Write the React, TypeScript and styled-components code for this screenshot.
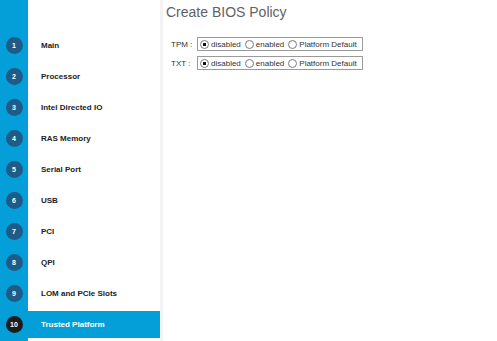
import { createGlobalStyle, styled } from "styled-components";

const steps = [
  "Main",
  "Processor",
  "Intel Directed IO",
  "RAS Memory",
  "Serial Port",
  "USB",
  "PCI",
  "QPI",
  "LOM and PCIe Slots",
  "Trusted Platform",
];

const activeStep = 9;

const policies = [
  { name: "TPM :", value: "disabled" },
  { name: "TXT :", value: "disabled" },
];

const options = ["disabled", "enabled", "Platform Default"];

const GlobalStyle = createGlobalStyle`
  html, body {
    margin: 0;
    padding: 0;
    background: #ffffff;
  }
  body {
    font-family: "Liberation Sans", Arial, sans-serif;
  }
`;

const App = (): JSX.Element => {
  return (
    <>
      <GlobalStyle />
      <Page>
        <Sidebar>
          {steps.map((step, index) => (
            <StepRow key={step}>
              <StepBadge $active={index === activeStep}>{index + 1}</StepBadge>
              <StepLabel $active={index === activeStep}>{step}</StepLabel>
            </StepRow>
          ))}
        </Sidebar>
        <Main>
          <Title>Create BIOS Policy</Title>
          <Form>
            {policies.map((policy) => (
              <FieldRow key={policy.name}>
                <FieldName>{policy.name}</FieldName>
                <RadioGroup>
                  {options.map((opt) => (
                    <RadioOption key={opt}>
                      <RadioCircle $checked={opt === policy.value} />
                      {opt}
                    </RadioOption>
                  ))}
                </RadioGroup>
              </FieldRow>
            ))}
          </Form>
        </Main>
      </Page>
    </>
  );
};

export default App;

const Page = styled.div`
  display: flex;
  width: 497px;
  height: 341px;
  overflow: hidden;
`;

const Sidebar = styled.nav`
  width: 160px;
  flex-shrink: 0;
  display: flex;
  flex-direction: column;
  gap: 4px;
  padding-top: 32px;
  box-sizing: border-box;
  background: linear-gradient(to right, #049fd9 28px, #ffffff 28px);
`;

const StepRow = styled.div`
  display: grid;
  grid-template-columns: 28px 1fr;
  height: 27px;
  align-items: center;
`;

const StepBadge = styled.span<{ $active: boolean }>`
  justify-self: center;
  width: 17px;
  height: 17px;
  border-radius: 50%;
  background: ${(p) => (p.$active ? "#1c1c1c" : "#1f5b87")};
  color: #ffffff;
  font-size: 7px;
  font-weight: 700;
  display: flex;
  align-items: center;
  justify-content: center;
`;

const StepLabel = styled.span<{ $active: boolean }>`
  height: 100%;
  display: flex;
  align-items: center;
  padding-left: 13px;
  font-size: 8px;
  font-weight: 700;
  color: ${(p) => (p.$active ? "#ffffff" : "#222222")};
  background: ${(p) => (p.$active ? "#049fd9" : "#ffffff")};
`;

const Main = styled.main`
  flex: 1;
  border-left: 3px solid #f3f3f3;
  padding: 4px 0 0 3px;
`;

const Title = styled.h1`
  margin: 0;
  font-size: 14px;
  line-height: 16px;
  font-weight: 400;
  color: #626262;
`;

const Form = styled.div`
  display: flex;
  flex-direction: column;
  gap: 5px;
  margin-top: 17px;
  padding-left: 5px;
`;

const FieldRow = styled.div`
  display: grid;
  grid-template-columns: 26px auto;
  align-items: center;
  justify-content: start;
`;

const FieldName = styled.span`
  font-size: 8px;
  color: #333333;
`;

const RadioGroup = styled.div`
  display: flex;
  align-items: center;
  gap: 4px;
  width: 166px;
  height: 14px;
  box-sizing: border-box;
  border: 1px solid #9a9a9a;
  padding: 0 2px;
`;

const RadioOption = styled.label`
  display: flex;
  align-items: center;
  gap: 2px;
  font-size: 8px;
  color: #333333;
`;

const RadioCircle = styled.span<{ $checked: boolean }>`
  width: 9px;
  height: 9px;
  box-sizing: border-box;
  border-radius: 50%;
  border: 1px solid #7a7a7a;
  background: ${(p) =>
    p.$checked
      ? "radial-gradient(circle, #111111 0 1.6px, #ffffff 2px)"
      : "#ffffff"};
`;
